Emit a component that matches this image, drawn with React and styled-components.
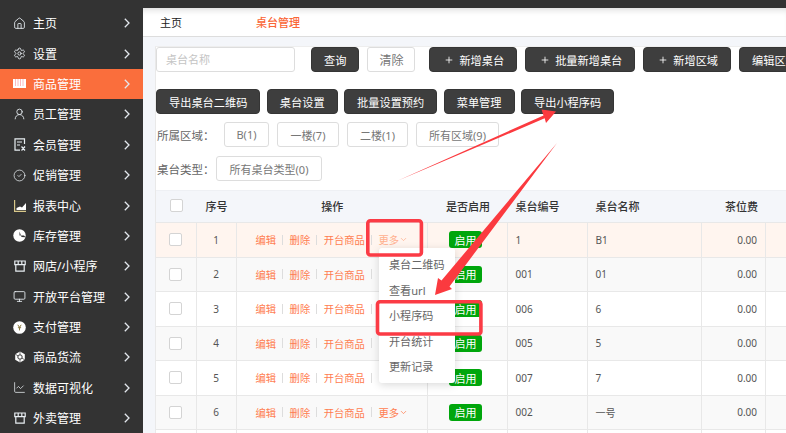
import React from 'react';
import styled, { createGlobalStyle } from 'styled-components';
import { Home, Settings, UserRound, CircleCheck, Monitor, ChartLine, Plus, ChevronDown } from 'lucide-react';

const Global = createGlobalStyle`
  html, body { margin: 0; padding: 0; width: 786px; height: 433px; overflow: hidden; background: #f4f6fa; }
  * { box-sizing: border-box; }
  body { font-family: "Noto Sans", "Noto Sans CJK SC", "Liberation Sans", sans-serif; }
`;

const Page = styled.div`
  position: relative;
  width: 786px;
  height: 433px;
  overflow: hidden;
  display: flex;
  flex-direction: column;
`;
const TopBar = styled.div`height: 8px; flex: none; background: #333;`;
const Body = styled.div`flex: 1; display: flex; min-height: 0;`;
const Sidebar = styled.nav`width: 143px; flex: none; background: #333;`;
const NavItem = styled.div`
  height: 30.4px;
  display: flex;
  align-items: center;
  padding-left: 13px;
  color: #fff;
  font-size: 12px;
  background: ${p => (p.$active ? '#fa6e3c' : 'transparent')};
`;
const NavIcon = styled.span`
  width: 13px;
  height: 13px;
  margin-right: 7px;
  display: flex;
  align-items: center;
  justify-content: center;
  color: #e8eef2;
  & svg { display: block; }
`;
const NavLabel = styled.span`flex: 1; white-space: nowrap;`;
const NavArrow = styled.svg`width: 6px; height: 10px; margin-right: 13px; flex: none;`;

const Main = styled.main`flex: 1; min-width: 0; display: flex; flex-direction: column;`;
const Header = styled.header`
  height: 29px;
  flex: none;
  background: #fff;
  border-bottom: 1px solid #ddd;
  box-shadow: inset 0 6px 6px -4px rgba(0, 0, 0, 0.14);
  display: flex;
  align-items: center;
  padding-left: 17px;
  font-size: 11px;
  color: #222;
`;
const Crumb = styled.span`
  width: 96px;
  &:last-child { color: #fa6636; font-weight: 500; }
`;
const Content = styled.div`flex: 1; min-height: 0; padding: 9px 0 0 12px;`;
const Panel = styled.section`
  height: 100%;
  background: #fff;
  border-left: 1px solid #e9e9e9;
  border-top: 1px solid #eee;
  overflow: hidden;
`;
const ToolRow = styled.div`
  display: flex;
  align-items: center;
  height: 25px;
  gap: ${p => p.$gap || 8}px;
  margin-top: ${p => p.$top || 0}px;
  white-space: nowrap;
`;
const SearchInput = styled.div`
  width: 139px;
  height: 25px;
  flex: none;
  border: 1px solid #ddd;
  border-radius: 3px;
  padding-left: 9px;
  font-size: 11px;
  line-height: 23px;
  color: #c4c4c4;
  margin-right: 8px;
`;
const DarkButton = styled.div`
  height: 25px;
  flex: none;
  display: flex;
  align-items: center;
  gap: 5px;
  padding: 0 12px 0 ${p => (p.$icon ? 14 : 12)}px;
  background: #3e3e3e;
  border: 1px solid #353535;
  border-radius: 4px;
  color: #fff;
  font-size: 11.2px;
`;
const LightButton = styled.div`
  height: 25px;
  flex: none;
  display: flex;
  align-items: center;
  justify-content: center;
  width: ${p => p.$w}px;
  border: 1px solid #ddd;
  border-radius: 3px;
  background: #fff;
  color: #777;
  font-size: ${p => p.$fs || 11}px;
  margin-right: ${p => p.$after || 0}px;
`;
const FilterLabel = styled.span`
  font-size: 11.5px;
  color: #666;
  padding-left: 1px;
  width: ${p => p.$w}px;
  flex: none;
`;
const Table = styled.div`margin-top: 9px; width: 640px;`;
const columns = '40.5px 40px 191.5px 80px 80px 113.5px 64px 30px';
const HeadRow = styled.div`
  display: grid;
  grid-template-columns: ${columns};
  height: 32px;
  background: #f4f6fa;
  border-top: 1px solid #eef0f4;
  padding-bottom: 2px;
  font-size: 11px;
  font-weight: 500;
  color: #333;
`;
const Row = styled.div`
  display: grid;
  grid-template-columns: ${columns};
  height: 34.5px;
  font-size: 10px;
  color: #555;
  border-top: 1px solid #e8e8e8;
  background: ${p => p.$bg};
`;
const Cell = styled.div`
  display: flex;
  align-items: center;
  justify-content: ${p => p.$align || 'flex-start'};
  padding: ${p => p.$pad || '0 7.5px'};
  white-space: nowrap;
  overflow: hidden;
`;
const BodyCell = styled(Cell)`border-right: 1px solid #e8e8e8;`;
const Check = styled.span`
  width: 13px;
  height: 13px;
  background: #fff;
  border: 1px solid #d4d4d4;
  border-radius: 2px;
`;
const Action = styled.span`
  color: ${p => (p.$soft ? '#ffb08e' : '#ff7d50')};
  font-size: 10.3px;
  display: flex;
  align-items: center;
`;
const Sep = styled.span`width: 1px; height: 10px; background: #ddd; margin: 0 6.5px 0 6px;`;
const Badge = styled.span`
  width: 33px;
  height: 17px;
  background: #00a60c;
  border-radius: 3px;
  color: #fff;
  font-size: 11px;
  display: flex;
  align-items: center;
  justify-content: center;
`;
const Menu = styled.div`
  position: absolute;
  left: 379px;
  top: 248px;
  width: 76px;
  height: 135px;
  padding-top: 4px;
  background: #fff;
  border-radius: 3px;
  box-shadow: 0 2px 8px rgba(0, 0, 0, 0.15);
`;
const MenuItem = styled.div`
  height: 25.6px;
  line-height: 25.6px;
  padding-left: 10px;
  font-size: 11.1px;
  color: #666;
  white-space: nowrap;
`;
const Annotation = styled.svg`
  position: absolute;
  left: 0;
  top: 0;
  width: 786px;
  height: 433px;
  pointer-events: none;
`;

const Store = () => (
  <svg width="12" height="12" viewBox="0 0 12 12" fill="none" stroke="currentColor" strokeWidth="1.2">
    <path d="M.8 1h10.4v3.6H.8zM4.2 1v3.6M7.8 1v3.6M1.8 4.6v6.6h8.4V4.6" />
  </svg>
);
const icons = {
  home: <Home size={13} strokeWidth={1.6} />,
  gear: <Settings size={13} strokeWidth={1.6} />,
  goods: (
    <svg width="13" height="9" viewBox="0 0 13 9">
      <rect width="13" height="9" fill="#fff" />
      <path d="M2.5 0v7M5 0v7M7.5 0v7M10 0v7" stroke="#fbbcc0" strokeWidth="1" />
    </svg>
  ),
  user: <UserRound size={14} strokeWidth={1.6} />,
  member: (
    <svg width="12" height="13" viewBox="0 0 12 13" fill="none" stroke="currentColor" strokeWidth="1.2">
      <path d="M10.5 6V.8H1v11.4h5M3 4h5M3 7h3M7.5 8.5l3.5 4M11 8.5l-3.5 4" />
    </svg>
  ),
  check: <CircleCheck size={13} strokeWidth={1.4} />,
  chart: (
    <svg width="12" height="12" viewBox="0 0 12 12">
      <path d="M.6 0v11.4H12" fill="none" stroke="#d8c88a" strokeWidth="1.2" />
      <path d="M2.5 10V8L6 6.5l2 1L12 3v7z" fill="#fff" />
    </svg>
  ),
  pie: (
    <svg width="13" height="13" viewBox="0 0 13 13">
      <circle cx="6.5" cy="6.5" r="6.2" fill="#fff" />
      <path d="M6.5 2.5v4H11L12.6 8.2 8.5 8z" fill="#333" />
    </svg>
  ),
  store: <Store />,
  monitor: <Monitor size={13} strokeWidth={1.6} />,
  pay: (
    <svg width="13" height="13" viewBox="0 0 13 13">
      <circle cx="6.5" cy="6.5" r="6.3" fill="#fff" />
      <path d="M4.8 3.8l1.7 2.6 1.7-2.6M6.5 6.4v3M4.9 6.7h3.2" fill="none" stroke="#8a7a40" strokeWidth="1" />
    </svg>
  ),
  flow: (
    <svg width="12" height="12" viewBox="0 0 12 12">
      <path d="M6 .5l4.8 2.7v5.6L6 11.5 1.2 8.8V3.2z" fill="#fff" />
      <circle cx="6" cy="6" r="2.2" fill="none" stroke="#333" strokeWidth="1" />
      <path d="M6 .5v3M6 8.5v3M1.2 3.2L4 4.8M8 7.2l2.8 1.6" stroke="#333" strokeWidth=".7" />
    </svg>
  ),
  line: <ChartLine size={13} strokeWidth={1.4} />,
};

const nav = [
  ['home', '主页'], ['gear', '设置'], ['goods', '商品管理', true], ['user', '员工管理'],
  ['member', '会员管理'], ['check', '促销管理'], ['chart', '报表中心'], ['pie', '库存管理'],
  ['store', '网店/小程序'], ['monitor', '开放平台管理'], ['pay', '支付管理'], ['flow', '商品货流'],
  ['line', '数据可视化'], ['store', '外卖管理'],
];

const rows = [
  { no: '1', code: '1', name: 'B1', bg: '#fff5ef', soft: true, more: true },
  { no: '2', code: '001', name: '01', bg: '#f9f9f9' },
  { no: '3', code: '006', name: '6', bg: '#fff' },
  { no: '4', code: '005', name: '5', bg: '#f9f9f9' },
  { no: '5', code: '007', name: '7', bg: '#fff' },
  { no: '6', code: '002', name: '一号', bg: '#f9f9f9', more: true },
];

export default function App() {
  return (
    <Page>
      <Global />
      <TopBar />
      <Body>
        <Sidebar>
          {nav.map(([icon, label, active]) => (
            <NavItem key={label} $active={active}>
              <NavIcon>{icons[icon]}</NavIcon>
              <NavLabel>{label}</NavLabel>
              <NavArrow viewBox="0 0 6 10">
                <path d="M.8.8L5 5 .8 9.2" fill="none" stroke="#e4e8ee" strokeWidth="1.3" />
              </NavArrow>
            </NavItem>
          ))}
        </Sidebar>
        <Main>
          <Header>
            <Crumb>主页</Crumb>
            <Crumb>桌台管理</Crumb>
          </Header>
          <Content>
            <Panel>
              <ToolRow>
                <SearchInput>桌台名称</SearchInput>
                <DarkButton>查询</DarkButton>
                <LightButton $w={48} $fs={12} $after={6}>清除</LightButton>
                <DarkButton $icon><Plus size={10} />新增桌台</DarkButton>
                <DarkButton $icon><Plus size={10} />批量新增桌台</DarkButton>
                <DarkButton $icon><Plus size={10} />新增区域</DarkButton>
                <DarkButton>编辑区域</DarkButton>
              </ToolRow>
              <ToolRow $top={17} $gap={6.5}>
                <DarkButton>导出桌台二维码</DarkButton>
                <DarkButton>桌台设置</DarkButton>
                <DarkButton>批量设置预约</DarkButton>
                <DarkButton>菜单管理</DarkButton>
                <DarkButton>导出小程序码</DarkButton>
              </ToolRow>
              <ToolRow $top={8}>
                <FilterLabel $w={60}>所属区域：</FilterLabel>
                <LightButton $w={45}>B(1)</LightButton>
                <LightButton $w={62}>一楼(7)</LightButton>
                <LightButton $w={61}>二楼(1)</LightButton>
                <LightButton $w={83}>所有区域(9)</LightButton>
              </ToolRow>
              <ToolRow $top={9}>
                <FilterLabel $w={52}>桌台类型：</FilterLabel>
                <LightButton $w={106}>所有桌台类型(0)</LightButton>
              </ToolRow>
              <Table>
                <HeadRow>
                  <Cell $align="center"><Check /></Cell>
                  <Cell $align="center">序号</Cell>
                  <Cell $align="center">操作</Cell>
                  <Cell $align="center">是否启用</Cell>
                  <Cell>桌台编号</Cell>
                  <Cell>桌台名称</Cell>
                  <Cell $align="flex-end">茶位费</Cell>
                  <Cell />
                </HeadRow>
                {rows.map(row => (
                  <Row key={row.no} $bg={row.bg}>
                    <BodyCell $align="center"><Check /></BodyCell>
                    <BodyCell $align="center">{row.no}</BodyCell>
                    <BodyCell $pad="0 0 0 19px">
                      <Action>编辑</Action><Sep />
                      <Action>删除</Action><Sep />
                      <Action>开台商品</Action><Sep />
                      {row.more && <Action $soft={row.soft}>更多<ChevronDown size={9} /></Action>}
                    </BodyCell>
                    <BodyCell $pad="0 0 0 21px"><Badge>启用</Badge></BodyCell>
                    <BodyCell>{row.code}</BodyCell>
                    <BodyCell>{row.name}</BodyCell>
                    <BodyCell $align="flex-end">0.00</BodyCell>
                    <Cell />
                  </Row>
                ))}
                <Row $bg="#fff">
                  <BodyCell /><BodyCell /><BodyCell /><BodyCell />
                  <BodyCell /><BodyCell /><BodyCell /><Cell />
                </Row>
              </Table>
            </Panel>
          </Content>
        </Main>
      </Body>
      <Menu>
        <MenuItem>桌台二维码</MenuItem>
        <MenuItem>查看url</MenuItem>
        <MenuItem>小程序码</MenuItem>
        <MenuItem>开台统计</MenuItem>
        <MenuItem>更新记录</MenuItem>
      </Menu>
      <Annotation viewBox="0 0 786 433">
        <g fill="none" stroke="#fb3b45" strokeWidth="3.6">
          <rect x="367.8" y="220.8" width="53.6" height="34.2" rx="2.5" />
          <rect x="377.5" y="301.8" width="103.4" height="32.2" rx="2.5" />
        </g>
        <g fill="#fb3a3f">
          <path d="M397 181L543.5 115.5 541.5 109.5 556 111.5 546 123 544.7 118.3z" />
          <path d="M557 143L449.5 286.5 452 289 435 295 438 278 441.5 280.5z" />
        </g>
      </Annotation>
    </Page>
  );
}
